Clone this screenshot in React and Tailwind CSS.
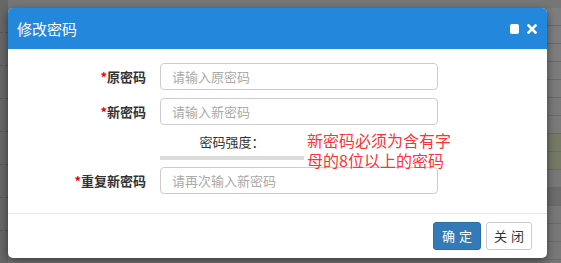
import React from "react";

const font = { fontFamily: '"Noto Sans CJK SC", "Noto Sans", sans-serif' };

function Row({ label, placeholder }) {
  return (
    <div className="flex items-center">
      <div className="w-[138px] text-right text-[13px] font-bold text-[#333] leading-none">
        <span className="text-[#e00]">*</span>
        {label}
      </div>
      <input
        className="ml-[14px] w-[278px] h-[27px] rounded-[4px] border border-[#ccc] bg-white px-[11px] text-[13px] text-[#333] placeholder-[#aaa] outline-none"
        placeholder={placeholder}
        style={font}
      />
    </div>
  );
}

export default function App() {
  const rightCells = [
    "bg-[#7d7d7d]",
    "bg-[#7d7d7d]",
    "bg-[#7d7d7d]",
    "bg-[#7b7b7b]",
    "bg-[#7b7b7b]",
    "bg-[#7a7a7a]",
    "bg-[#7a7a7a]",
    "bg-[#757a66]",
    "bg-[#757a66]",
    "bg-[#787878]",
    "bg-[#6c6c6c]",
    "bg-[#787878]",
    "bg-[#787878]",
    "bg-[#787878]",
  ];
  return (
    <div className="relative w-[561px] h-[263px] overflow-hidden bg-[#767676]" style={font}>
      {/* backdrop page */}
      <div className="flex h-full">
        <div className="w-[8px] h-full bg-[#676767] flex flex-col">
          {[0, 1, 2, 3, 4, 5, 6].map((i) => (
            <div key={i} className="h-[33px] border-b border-dashed border-[#555]" />
          ))}
        </div>
        <div className="flex-1" />
        <div className="w-[14px] h-full flex flex-col pt-[8px]">
          {rightCells.map((c, i) => (
            <div key={i} className={`h-[18px] border-b border-[#6a6a6a] ${c}`} />
          ))}
        </div>
      </div>

      {/* dialog */}
      <div className="absolute left-[8px] top-[8px] w-[539px] h-[250px] bg-white rounded-[5px] shadow-[0_3px_9px_rgba(0,0,0,0.5)] overflow-hidden flex flex-col">
        <div className="h-[41px] bg-[#2387db] flex items-center pl-[9px] pr-[10px] shrink-0">
          <div className="text-white text-[15px] leading-none">修改密码</div>
          <div className="ml-auto flex items-center gap-[8px]">
            <div className="w-[9px] h-[10px] rounded-[2px] bg-white" />
            <svg width="10" height="10" viewBox="0 0 10 10">
              <path d="M1.5 1.5 L8.5 8.5 M8.5 1.5 L1.5 8.5" stroke="white" strokeWidth="2.6" strokeLinecap="square" />
            </svg>
          </div>
        </div>

        <div className="h-[164px] shrink-0 pt-[14px] flex flex-col">
          <Row label="原密码" placeholder="请输入原密码" />
          <div className="h-[8px]" />
          <Row label="新密码" placeholder="请输入新密码" />
          <div className="relative flex h-[42px]">
            <div className="ml-[152px] w-[144px] flex flex-col items-center pt-[9px]">
              <div className="text-[13px] leading-[15px] text-[#333]">密码强度：</div>
              <div className="mt-[7px] w-[144px] h-[4px] bg-[#dcdcdc]" />
            </div>
            <div className="absolute left-[299px] top-[5px] w-[150px] text-[16px] leading-[20px] text-[#ff3333]">
              新密码必须为含有字母的8位以上的密码
            </div>
          </div>
          <Row label="重复新密码" placeholder="请再次输入新密码" />
        </div>

        <div className="border-t border-[#e5e5e5] flex-1 flex items-start justify-end pt-[8px] pr-[15px] gap-[5px]">
          <button className="w-[48px] h-[28px] rounded-[3px] bg-[#337ab7] border border-[#2e6da4] text-white text-[13px] tracking-[4px] pl-[4px]">
            确定
          </button>
          <button className="w-[46px] h-[28px] rounded-[3px] bg-white border border-[#ccc] text-[#333] text-[13px] tracking-[4px] pl-[4px]">
            关闭
          </button>
        </div>
      </div>
    </div>
  );
}
